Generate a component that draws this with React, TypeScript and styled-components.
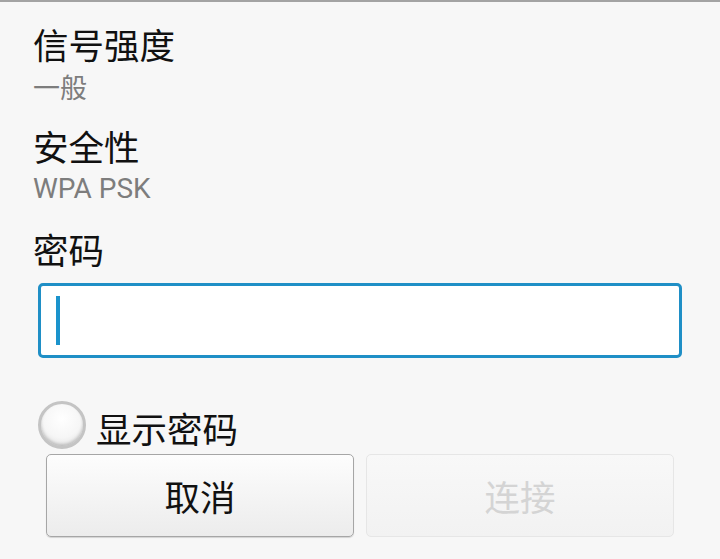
import React from "react";
import styled, { createGlobalStyle } from "styled-components";

const Global = createGlobalStyle`
  html, body { margin: 0; padding: 0; background: #f7f7f7; }
  body { font-family: "Noto Sans CJK SC", "Noto Sans", sans-serif; }
`;

const Page = styled.div`
  width: 720px;
  height: 559px;
  box-sizing: border-box;
  border-top: 2px solid #a3a3a3;
  background: #f7f7f7;
  padding: 21px 0 0 33px;
  overflow: hidden;
  display: flex;
  flex-direction: column;
`;

const Label = styled.div<{ $gap?: number }>`
  font-size: 35.5px;
  line-height: 41px;
  color: #111;
  margin-top: ${(p) => p.$gap ?? 0}px;
`;

const Value = styled.div<{ $latin?: boolean }>`
  font-family: ${(p) => (p.$latin ? `Roboto, "Noto Sans", sans-serif` : `"Noto Sans CJK SC", sans-serif`)};
  font-size: ${(p) => (p.$latin ? 28 : 27)}px;
  line-height: 32px;
  color: #7d7d7d;
  margin-top: 7px;
`;

const InputBox = styled.div`
  margin: 14px 0 0 5px;
  width: 644px;
  height: 75px;
  box-sizing: border-box;
  border: 3px solid #1f8fc6;
  border-radius: 5px;
  background: #fff;
  display: flex;
  align-items: center;
  padding-left: 15px;
`;

const Caret = styled.div`
  width: 4px;
  height: 49px;
  background: #1b93cc;
`;

const CheckRow = styled.div`
  display: flex;
  align-items: center;
  gap: 10px;
  margin: 42px 0 0 5px;
  height: 50px;
`;

const Radio = styled.div`
  width: 48px;
  height: 48px;
  border-radius: 50%;
  box-sizing: border-box;
  border: 3px solid #c4c4c4;
  background: radial-gradient(circle at 50% 35%, #ffffff 0%, #f6f6f6 55%, #d8d8d8 100%);
  box-shadow: inset 0 -2px 3px rgba(0, 0, 0, 0.18);
`;

const CheckText = styled.span`
  font-size: 35.5px;
  line-height: 41px;
  color: #111;
  margin-top: 4px;
`;

const Buttons = styled.div`
  display: flex;
  gap: 12px;
  margin: 4px 0 0 13px;
`;

const Button = styled.div<{ $disabled?: boolean }>`
  width: 308px;
  height: 83px;
  box-sizing: border-box;
  border-radius: 5px;
  display: flex;
  align-items: center;
  justify-content: center;
  font-size: 35.5px;
  color: ${(p) => (p.$disabled ? "#d4d4d4" : "#111")};
  border: 1px solid ${(p) => (p.$disabled ? "#e6e6e6" : "#a6a6a6")};
  background: ${(p) =>
    p.$disabled
      ? "linear-gradient(#f8f8f8, #f2f2f2)"
      : "linear-gradient(#fdfdfd, #ececec)"};
  box-shadow: ${(p) => (p.$disabled ? "none" : "0 1px 1px rgba(0,0,0,0.15)")};
`;

export default function App() {
  return (
    <>
      <Global />
      <Page>
        <Label>信号强度</Label>
        <Value>一般</Value>
        <Label $gap={22}>安全性</Label>
        <Value $latin>WPA PSK</Value>
        <Label $gap={23}>密码</Label>
        <InputBox>
          <Caret />
        </InputBox>
        <CheckRow>
          <Radio />
          <CheckText>显示密码</CheckText>
        </CheckRow>
        <Buttons>
          <Button>取消</Button>
          <Button $disabled>连接</Button>
        </Buttons>
      </Page>
    </>
  );
}
